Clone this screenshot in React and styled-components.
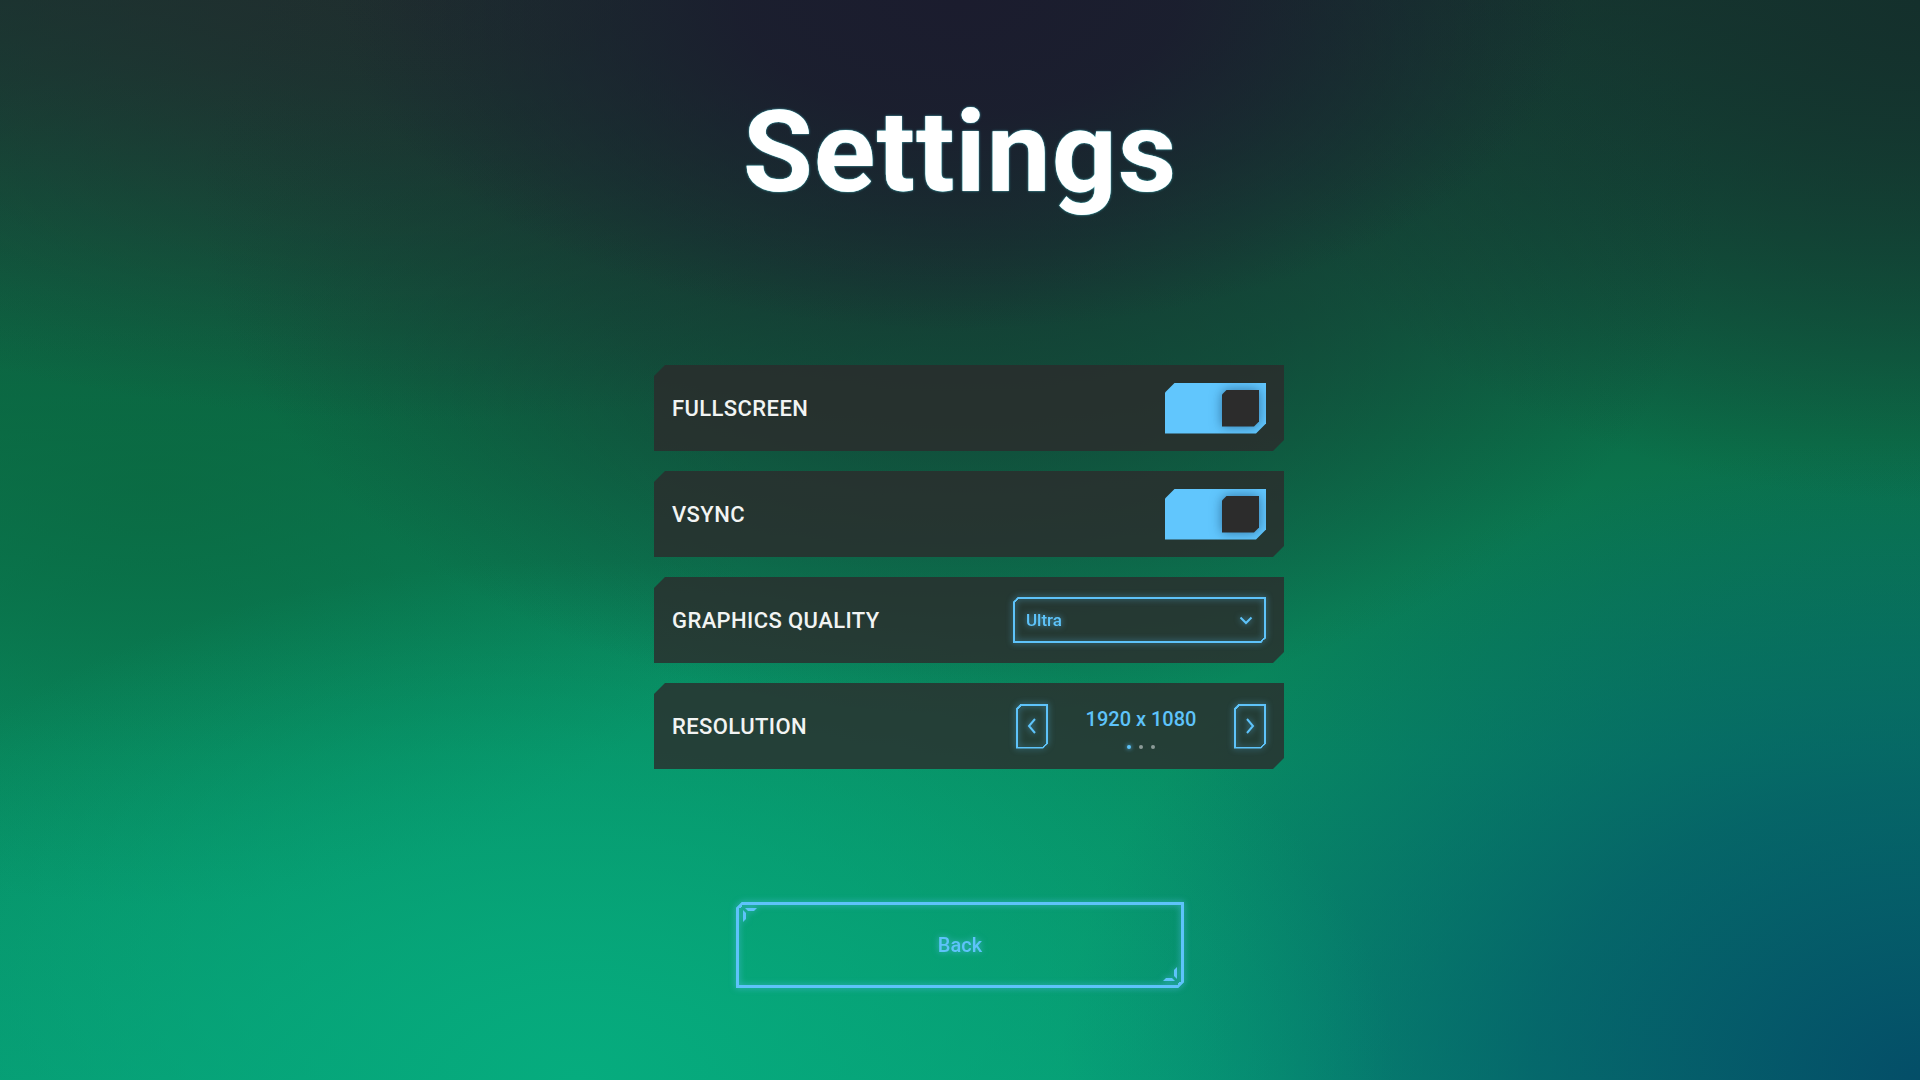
import React, { useState } from 'react';
import styled, { createGlobalStyle, css } from 'styled-components';

const BLUE = '#5ec3fa';
const ROW_BG = 'rgba(44, 42, 44, 0.8)';

const GlobalStyle = createGlobalStyle`
    html, body {
        margin: 0;
        padding: 0;
        background: #0b5a44;
    }
    * {
        box-sizing: border-box;
    }
`;

const Screen = styled.div`
    width: 1920px;
    height: 1080px;
    overflow: hidden;
    display: flex;
    flex-direction: column;
    align-items: center;
    padding-top: 95px;
    font-family: Roboto, "Liberation Sans", sans-serif;
    background:
        radial-gradient(ellipse 620px 330px at 50% 0%, rgba(27, 28, 46, 1) 0%, rgba(27, 28, 46, 0.9) 35%, rgba(27, 28, 46, 0) 100%),
        radial-gradient(ellipse 760px 520px at 50% 18%, rgba(22, 52, 48, 0.85) 0%, rgba(22, 52, 48, 0.5) 50%, rgba(22, 52, 48, 0) 100%),
        radial-gradient(ellipse 900px 420px at 22% 0%, rgba(34, 44, 46, 0.9) 0%, rgba(34, 44, 46, 0) 100%),
        radial-gradient(ellipse 820px 520px at 30% 100%, rgba(6, 172, 126, 1) 0%, rgba(6, 172, 126, 0) 100%),
        radial-gradient(ellipse 860px 640px at 100% 100%, rgba(4, 78, 104, 1) 0%, rgba(4, 78, 104, 0.65) 45%, rgba(4, 78, 104, 0) 100%),
        radial-gradient(ellipse 700px 500px at 100% 0%, rgba(20, 48, 44, 1) 0%, rgba(20, 48, 44, 0) 100%),
        radial-gradient(ellipse 600px 420px at 8% 45%, rgba(10, 104, 64, 0.7) 0%, rgba(10, 104, 64, 0) 100%),
        linear-gradient(180deg, #163a32 0%, #0b6e48 40%, #088d62 70%, #079a72 100%);
`;

const Title = styled.h1`
    margin: 0;
    font-size: 114px;
    line-height: 1;
    font-weight: 700;
    color: #ffffff;
    letter-spacing: 1px;
    text-shadow: 0 0 1px #7ff6ff, 0 0 3px rgba(90, 240, 255, 0.45);
`;

const List = styled.div`
    width: 630px;
    margin-top: 156px;
    margin-left: 18px;
    display: flex;
    flex-direction: column;
    gap: 20px;
`;

const Row = styled.div`
    height: 86px;
    padding: 0 18px;
    display: flex;
    align-items: center;
    justify-content: space-between;
    background: ${ROW_BG};
    clip-path: polygon(11px 0, 100% 0, 100% calc(100% - 11px), calc(100% - 11px) 100%, 0 100%, 0 11px);
`;

const Label = styled.span`
    font-size: 22px;
    font-weight: 500;
    letter-spacing: 0.4px;
    color: #f2f4f3;
    text-transform: uppercase;
`;

const cut = (size) => css`
    clip-path: polygon(${size}px 0, 100% 0, 100% calc(100% - ${size}px), calc(100% - ${size}px) 100%, 0 100%, 0 ${size}px);
`;

// bordered box with two cut corners, the diagonal strokes painted by the pseudos
const Bevel = styled.div`
    position: relative;
    border: ${(p) => p.$bw}px solid ${BLUE};
    ${(p) => cut(p.$cut)}

    &::before,
    &::after {
        content: '';
        position: absolute;
        width: ${(p) => p.$cut}px;
        height: ${(p) => p.$cut}px;
        pointer-events: none;
    }
    &::before {
        top: -${(p) => p.$bw}px;
        left: -${(p) => p.$bw}px;
        background: linear-gradient(to bottom right, transparent 50%, ${BLUE} 50%, ${BLUE} calc(50% + ${(p) => p.$bw}px), transparent calc(50% + ${(p) => p.$bw}px));
    }
    &::after {
        bottom: -${(p) => p.$bw}px;
        right: -${(p) => p.$bw}px;
        background: linear-gradient(to top left, transparent 50%, ${BLUE} 50%, ${BLUE} calc(50% + ${(p) => p.$bw}px), transparent calc(50% + ${(p) => p.$bw}px));
    }
`;

const Glow = styled.div`
    filter: drop-shadow(0 0 3px rgba(94, 195, 250, 0.65));
`;

const ToggleTrack = styled.button`
    width: 101px;
    height: 51px;
    padding: 7px;
    border: 0;
    display: flex;
    justify-content: ${(p) => (p.$on ? 'flex-end' : 'flex-start')};
    background: ${(p) => (p.$on ? '#61c6fd' : '#3a4a4a')};
    cursor: pointer;
    ${cut(10)}
`;

const KnobShadow = styled.div`
    filter: drop-shadow(0 0 6px rgba(10, 50, 90, 0.55));
`;

const Knob = styled.div`
    width: 37px;
    height: 37px;
    background: #2c2c2c;
    ${cut(5)}
`;

const Select = styled(Bevel)`
    width: 253px;
    height: 46px;
    padding: 0 11px 0 11px;
    display: flex;
    align-items: center;
    justify-content: space-between;
    font-size: 17px;
    font-weight: 500;
    color: ${BLUE};
    cursor: pointer;
`;

const Stepper = styled.div`
    width: 250px;
    display: flex;
    align-items: center;
    justify-content: space-between;
`;

const StepButton = styled(Bevel)`
    width: 32px;
    height: 45px;
    display: flex;
    align-items: center;
    justify-content: center;
    cursor: pointer;
`;

const Value = styled.div`
    padding-top: 4px;
    display: flex;
    flex-direction: column;
    align-items: center;
`;

const ValueText = styled.span`
    font-size: 20px;
    line-height: 24px;
    font-weight: 500;
    color: ${BLUE};
`;

const Dots = styled.div`
    margin-top: 14px;
    display: flex;
    gap: 8px;
`;

const Dot = styled.span`
    width: 4px;
    height: 4px;
    border-radius: 50%;
    background: ${(p) => (p.$active ? BLUE : '#8c9b98')};
    box-shadow: ${(p) => (p.$active ? `0 0 4px ${BLUE}` : 'none')};
`;

const BackWrap = styled(Glow)`
    margin-top: 133px;
`;

const BackButton = styled(Bevel)`
    width: 448px;
    height: 86px;
    display: flex;
    align-items: center;
    justify-content: center;
    font-size: 20px;
    font-weight: 500;
    color: ${BLUE};
    background: transparent;
    cursor: pointer;
`;

const Corner = styled.svg`
    position: absolute;
    width: 14px;
    height: 14px;
    ${(p) =>
        p.$end
            ? css`
                  right: 4px;
                  bottom: 4px;
                  transform: rotate(180deg);
              `
            : css`
                  left: 4px;
                  top: 3px;
              `}
`;

const CornerMark = ({ end }) => (
    <Corner $end={end} viewBox="0 0 14 14">
        <path d="M2 0H14L11 3H5Z" fill={BLUE} />
        <path d="M0 2L3 5V11L0 14Z" fill={BLUE} />
    </Corner>
);

const Chevron = ({ dir }) => {
    const points = {
        left: '9,2 3,9 9,16',
        right: '3,2 9,9 3,16',
    }[dir];
    return (
        <svg width="12" height="18" viewBox="0 0 12 18">
            <polyline points={points} fill="none" stroke={BLUE} strokeWidth="2" />
        </svg>
    );
};

const ChevronDown = () => (
    <svg width="14" height="9" viewBox="0 0 14 9">
        <polyline points="1.5,1.5 7,7 12.5,1.5" fill="none" stroke={BLUE} strokeWidth="2" />
    </svg>
);

const Toggle = ({ on, onChange }) => (
    <ToggleTrack $on={on} onClick={() => onChange(!on)}>
        <KnobShadow>
            <Knob />
        </KnobShadow>
    </ToggleTrack>
);

const resolutions = ['1920 x 1080', '2560 x 1440', '3840 x 2160'];

export default function App() {
    const [fullscreen, setFullscreen] = useState(true);
    const [vsync, setVsync] = useState(true);
    const [res, setRes] = useState(0);

    const step = (d) => setRes((r) => (r + d + resolutions.length) % resolutions.length);

    return (
        <Screen>
            <GlobalStyle />
            <Title>Settings</Title>

            <List>
                <Row>
                    <Label>Fullscreen</Label>
                    <Toggle on={fullscreen} onChange={setFullscreen} />
                </Row>
                <Row>
                    <Label>VSync</Label>
                    <Toggle on={vsync} onChange={setVsync} />
                </Row>
                <Row>
                    <Label>Graphics Quality</Label>
                    <Glow>
                        <Select $bw={2} $cut={5}>
                            <span>Ultra</span>
                            <ChevronDown />
                        </Select>
                    </Glow>
                </Row>
                <Row>
                    <Label>Resolution</Label>
                    <Stepper>
                        <Glow>
                            <StepButton $bw={2} $cut={5} onClick={() => step(-1)}>
                                <Chevron dir="left" />
                            </StepButton>
                        </Glow>
                        <Value>
                            <ValueText>{resolutions[res]}</ValueText>
                            <Dots>
                                {resolutions.map((r, i) => (
                                    <Dot key={r} $active={i === res} />
                                ))}
                            </Dots>
                        </Value>
                        <Glow>
                            <StepButton $bw={2} $cut={5} onClick={() => step(1)}>
                                <Chevron dir="right" />
                            </StepButton>
                        </Glow>
                    </Stepper>
                </Row>
            </List>

            <BackWrap>
                <BackButton $bw={3} $cut={6}>
                    <CornerMark />
                    Back
                    <CornerMark end />
                </BackButton>
            </BackWrap>
        </Screen>
    );
}
